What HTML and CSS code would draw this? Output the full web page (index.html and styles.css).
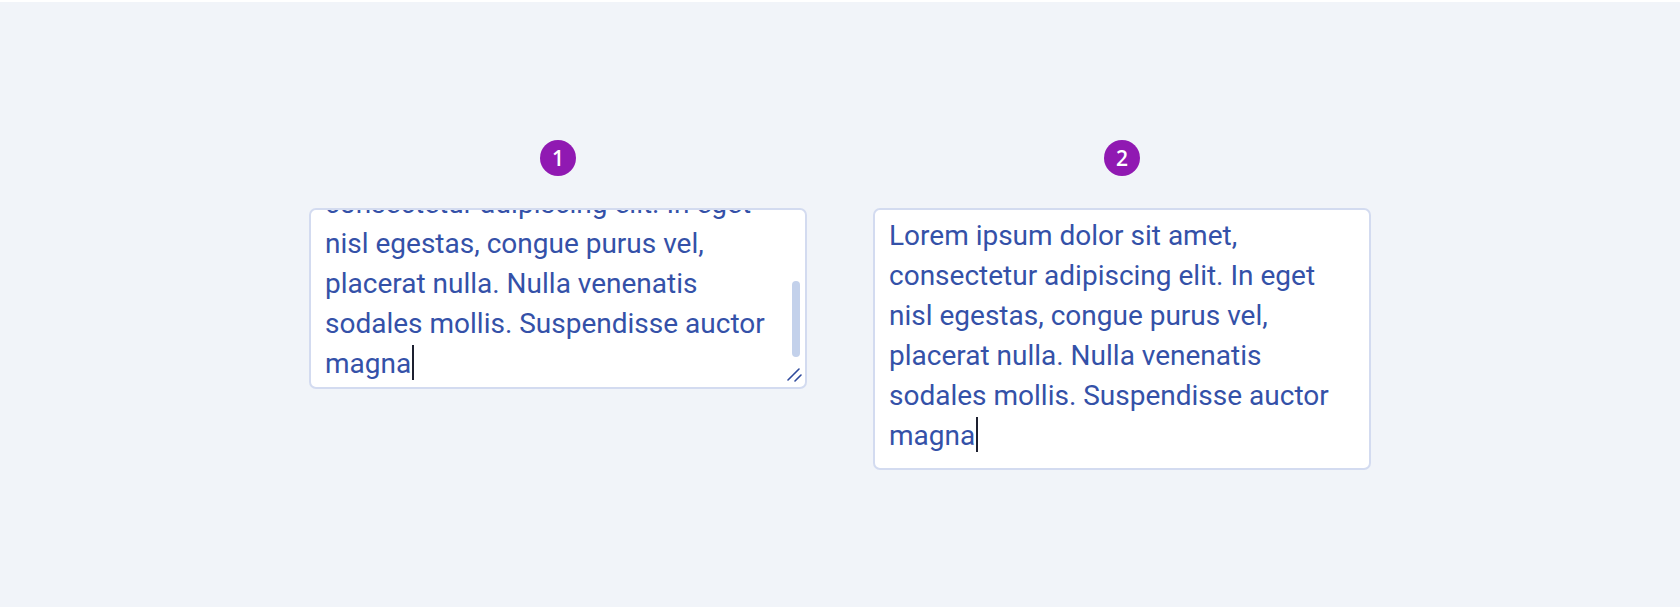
FILE: index.html
```html
<!DOCTYPE html>
<html lang="en">
<head>
    <meta charset="UTF-8">
    <meta name="viewport" content="width=device-width, initial-scale=1.0">
    <title>Textarea</title>
    <link rel="stylesheet" href="styles.css">
</head>
<body>
    <main class="demo">
        <!-- Stała wysokość, tekst przewinięty na dół -->
        <section class="demo-item">
            <span class="step">1</span>
            <div class="field field-scrolled">
                <div class="field-text">Lorem ipsum dolor sit amet, consectetur adipiscing elit. In eget nisl egestas, congue purus vel, placerat nulla. Nulla venenatis sodales mollis. Suspendisse auctor magna<span class="caret"></span></div>
                <span class="scroll-thumb"></span>
                <svg class="grip" width="16" height="16" viewBox="0 0 16 16">
                    <path d="M2 14 L13 3 M9 15 L15 9" stroke="#2f4a9c" stroke-width="1.6" stroke-linecap="round" fill="none"/>
                </svg>
            </div>
        </section>

        <!-- Wysokość dopasowana do treści -->
        <section class="demo-item">
            <span class="step">2</span>
            <div class="field">
                <div class="field-text">Lorem ipsum dolor sit amet, consectetur adipiscing elit. In eget nisl egestas, congue purus vel, placerat nulla. Nulla venenatis sodales mollis. Suspendisse auctor magna<span class="caret"></span></div>
            </div>
        </section>
    </main>
</body>
</html>
```

FILE: styles.css
```css
/* Ustawienia ogólne */
body {
    margin: 0;
    border-top: 2px solid #fff;
    background-color: #f1f4f9;
    font-family: Roboto, "Liberation Sans", sans-serif;
    min-height: 605px;
}

.demo {
    display: flex;
    justify-content: center;
    gap: 66px;
    padding-top: 138px;
}

.demo-item {
    width: 498px;
    display: flex;
    flex-direction: column;
    align-items: center;
    gap: 32px;
}

/* Numer przykładu */
.step {
    width: 36px;
    height: 36px;
    border-radius: 50%;
    background-color: #9019b2;
    color: #fff;
    font-family: "Open Sans", "Noto Sans", sans-serif;
    font-size: 21px;
    font-weight: 600;
    display: flex;
    align-items: center;
    justify-content: center;
}

/* Pole tekstowe */
.field {
    position: relative;
    align-self: stretch;
    box-sizing: border-box;
    background-color: #fff;
    border: 2px solid #d3dbf0;
    border-radius: 7px;
    padding: 6px 30px 12px 14px;
    font-size: 28px;
    line-height: 40px;
    color: #3451a8;
}

.field-scrolled {
    height: 181px;
    overflow: hidden;
    display: flex;
    flex-direction: column;
    justify-content: flex-end;
    padding-bottom: 3px;
}

.caret {
    display: inline-block;
    width: 2px;
    height: 35px;
    margin-left: 1px;
    vertical-align: -7px;
    background-color: #1d2030;
}

.scroll-thumb {
    position: absolute;
    top: 71px;
    right: 5px;
    width: 8px;
    height: 76px;
    border-radius: 4px;
    background-color: #c3d1eb;
}

.grip {
    position: absolute;
    right: 3px;
    bottom: 5px;
}
```
